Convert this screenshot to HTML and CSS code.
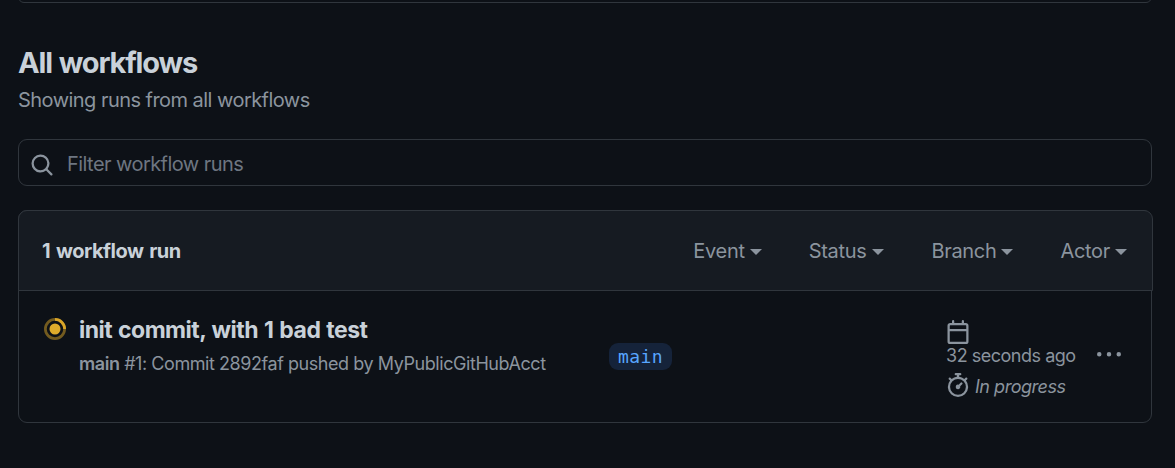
FILE: index.html
```html
<!DOCTYPE html>
<html lang="en">
<head>
<meta charset="utf-8">
<title>All workflows</title>
<link rel="stylesheet" href="styles.css">
</head>
<body>
<main class="page">
  <div class="previous-card"></div>
  <header class="intro">
    <h1 class="title">All workflows</h1>
    <p class="subtitle">Showing runs from all workflows</p>
  </header>
  <div class="search">
    <svg class="icon search-icon" viewBox="0 0 16 16"><path d="M10.68 11.74a6 6 0 0 1-7.922-8.982 6 6 0 0 1 8.982 7.922l3.04 3.04a.749.749 0 0 1-.326 1.275.749.749 0 0 1-.734-.215ZM11.5 7a4.499 4.499 0 1 0-8.997 0A4.499 4.499 0 0 0 11.5 7Z"/></svg>
    <span class="placeholder">Filter workflow runs</span>
  </div>
  <section class="runs">
    <div class="runs-header">
      <strong class="count">1 workflow run</strong>
      <nav class="filters">
        <span class="filter">Event<i class="caret"></i></span>
        <span class="filter filter-status">Status<i class="caret"></i></span>
        <span class="filter filter-branch">Branch<i class="caret"></i></span>
        <span class="filter filter-actor">Actor<i class="caret"></i></span>
      </nav>
    </div>
    <div class="run">
      <svg class="status" viewBox="0 0 16 16"><circle cx="8" cy="8" r="7" fill="none" stroke="#d9a528" stroke-opacity=".5" stroke-width="2"/><path d="M8 1a7 7 0 0 1 7 7" fill="none" stroke="#d9a528" stroke-width="2"/><circle cx="8" cy="8" r="4" fill="#deab2b"/></svg>
      <div class="details">
        <h2 class="run-title">init commit, with 1 bad test</h2>
        <p class="meta"><b>main</b> #1: Commit 2892faf pushed by MyPublicGitHubAcct</p>
      </div>
      <div class="branch-cell"><span class="branch">main</span></div>
      <div class="timing">
        <svg class="icon calendar" viewBox="0 0 16 16"><path d="M4.75 0a.75.75 0 0 1 .75.75V2h5V.75a.75.75 0 0 1 1.5 0V2h1.25c.966 0 1.75.784 1.75 1.75v10.5A1.75 1.75 0 0 1 13.25 16H2.75A1.75 1.75 0 0 1 1 14.25V3.75C1 2.784 1.784 2 2.75 2H4V.75A.75.75 0 0 1 4.75 0ZM2.5 7.5v6.75c0 .138.112.25.25.25h10.5a.25.25 0 0 0 .25-.25V7.5Zm10.75-4H2.75a.25.25 0 0 0-.25.25V6h11V3.75a.25.25 0 0 0-.25-.25Z"/></svg>
        <span class="ago">32 seconds ago</span>
        <span class="duration"><svg class="icon stopwatch" viewBox="0 0 16 16"><path d="M5.75.75A.75.75 0 0 1 6.5 0h3a.75.75 0 0 1 0 1.5h-.75v1l-.001.041a6.724 6.724 0 0 1 3.464 1.435l.007-.006.75-.75a.749.749 0 0 1 1.275.326.749.749 0 0 1-.215.734l-.75.75-.006.007a6.75 6.75 0 1 1-10.548 0L2.72 5.03l-.75-.75a.751.751 0 0 1 .018-1.042.751.751 0 0 1 1.042-.018l.75.75.007.006A6.72 6.72 0 0 1 7.25 2.541V1.5H6.5a.75.75 0 0 1-.75-.75ZM8 14.5a5.25 5.25 0 1 0-.001-10.501A5.25 5.25 0 0 0 8 14.5Zm.389-6.7 1.33-1.33a.75.75 0 1 1 1.061 1.06L9.45 8.861A1.503 1.503 0 0 1 8 10.75a1.499 1.499 0 1 1 .389-2.95Z"/></svg><em class="progress">In progress</em></span>
      </div>
      <svg class="icon menu" viewBox="0 0 16 16"><path d="M8 9a1.5 1.5 0 1 0 0-3 1.5 1.5 0 0 0 0 3ZM1.5 9a1.5 1.5 0 1 0 0-3 1.5 1.5 0 0 0 0 3Zm13 0a1.5 1.5 0 1 0 0-3 1.5 1.5 0 0 0 0 3Z"/></svg>
    </div>
  </section>
</main>
</body>
</html>
```
FILE: styles.css
```css
* { box-sizing: border-box; }
body {
  margin: 0;
  height: 468px;
  overflow: hidden;
  background: #0d1117;
  color: #c9d1d9;
  font-family: Inter, "Liberation Sans", sans-serif;
}
.page { padding: 0 23px 0 18px; }
h1, h2, p { margin: 0; white-space: nowrap; }
.icon { display: block; fill: #8b949e; flex: none; }
.previous-card {
  height: 12px;
  margin-top: -9px;
  border: 1px solid #30363d;
  border-radius: 9px;
}
.intro { height: 136px; padding-top: 41px; }
.title { font-size: 29px; line-height: 37px; font-weight: 700; letter-spacing: -1.15px; word-spacing: 1px; }
.subtitle { margin-top: 4px; font-size: 20px; line-height: 30px; color: #8b949e; letter-spacing: -0.54px; }
.search {
  display: flex;
  align-items: center;
  height: 47px;
  padding: 2px 11px 0;
  border: 1px solid #30363d;
  border-radius: 9px;
}
.search-icon { width: 24px; height: 24px; margin-top: 3px; }
.placeholder { margin-left: 13px; font-size: 20px; color: #6e7681; letter-spacing: -0.56px; }
.runs {
  margin-top: 24px;
  height: 213px;
  border: 1px solid #30363d;
  border-radius: 9px;
}
.runs-header {
  display: flex;
  align-items: center;
  justify-content: space-between;
  height: 81px;
  margin: -1px -2px 0 -1px;
  padding: 0 25px 0 23px;
  background: #161b22;
  border: 1px solid #30363d;
  border-radius: 9px 9px 0 0;
}
.count { font-size: 20px; font-weight: 700; letter-spacing: -0.5px; word-spacing: 1.6px; }
.filters { display: flex; gap: 47px; font-size: 20px; color: #8b949e; }
.filter { display: flex; align-items: center; letter-spacing: -0.3px; }
.filter-status { margin-right: 1px; }
.filter-branch { letter-spacing: -0.35px; }
.caret {
  margin: 3px 0 0 5px;
  border: 6px solid transparent;
  border-top-color: #8b949e;
  border-bottom: 0;
}
.run { display: flex; height: 131px; padding-left: 25px; }
.status { width: 22px; height: 22px; margin-top: 27px; flex: none; }
.details { width: 530px; margin-left: 13px; padding-top: 24px; flex: none; }
.run-title { font-size: 23px; line-height: 30px; font-weight: 700; letter-spacing: -0.52px; word-spacing: 1px; }
.meta { margin-top: 6px; font-size: 18px; line-height: 26px; color: #8b949e; letter-spacing: -0.44px; }
.meta b { font-weight: 600; }
.branch-cell { width: 337px; padding-top: 52px; flex: none; }
.branch {
  display: inline-block;
  height: 27px;
  padding: 0 9px;
  border-radius: 9px;
  background: #15233a;
  color: #58a6ff;
  font: 18px/27px "DejaVu Sans Mono", monospace;
  letter-spacing: 0.4px;
}
.timing { width: 151px; padding-top: 29px; color: #8b949e; font-size: 18px; flex: none; }
.calendar { width: 24px; height: 24px; }
.ago { display: block; line-height: 24px; letter-spacing: -0.48px; white-space: nowrap; }
.duration { display: flex; align-items: center; height: 32px; margin-top: 2px; }
.stopwatch { width: 24px; height: 24px; margin-bottom: 2px; }
.progress { margin-left: 5px; letter-spacing: -0.48px; white-space: nowrap; }
.menu { width: 24px; height: 24px; margin-top: 52px; }
```
